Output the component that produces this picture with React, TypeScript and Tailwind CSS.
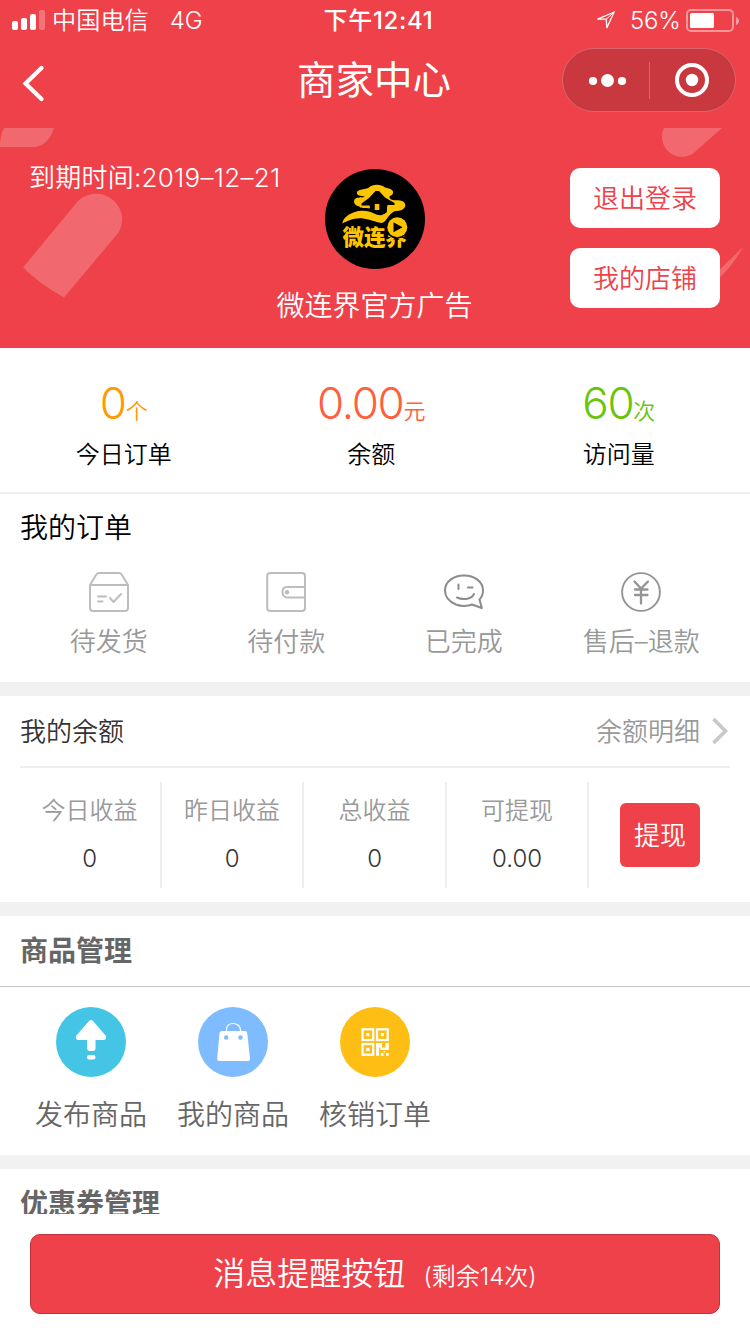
import type { ReactNode } from "react";

function SignalIcon() {
  return (
    <svg width="33" height="20" viewBox="0 0 33 20" fill="#fff">
      <rect x="0" y="11" width="6" height="9" rx="2" />
      <rect x="9" y="8" width="6" height="12" rx="2" />
      <rect x="18" y="4" width="6" height="16" rx="2" />
      <rect x="27" y="0" width="6" height="20" rx="2" opacity="0.27" />
    </svg>
  );
}

function StatusBar() {
  return (
    <div className="flex h-10 items-center font-[350] text-white">
      <div className="flex flex-1 items-center pl-3">
        <SignalIcon />
        <span className="ml-[7px] pt-[2px] text-[24.200px] leading-10">中国电信</span>
        <span className="ml-[21px] pt-[2px] text-[24px] leading-10">4G</span>
      </div>
      <div className="w-[118px] pl-[6px] pt-[2px] text-center text-[24px] font-medium leading-10 tracking-[0.7px] whitespace-nowrap">
        下午12:41
      </div>
      <div className="flex flex-1 items-center justify-end pr-[11px]">
        <svg width="20" height="20" viewBox="0 0 20 20" fill="none" stroke="#fff" strokeWidth="1.3">
          <path d="M1.500 9.200 18 2.200 10.800 18 10.300 9.200Z" />
          <path d="M10.300 9.200 18 2.200" strokeWidth="1" />
        </svg>
        <span className="ml-[14px] w-[50px] pt-[2px] text-[24px] leading-10 tracking-[-0.2px] whitespace-nowrap">56%</span>
        <svg className="ml-[6px]" width="53" height="23" viewBox="0 0 53 23">
          <rect x="1" y="1" width="46" height="21" rx="4" fill="none" stroke="#fff" strokeOpacity="0.45" strokeWidth="2" />
          <rect x="4" y="4" width="24" height="15" rx="1.5" fill="#fff" />
          <path d="M50 8c4 1.500 4 6.500 0 8z" fill="#fff" fillOpacity="0.5" />
        </svg>
      </div>
    </div>
  );
}

function NavBar() {
  return (
    <div className="flex h-22 items-start text-white">
      <div className="flex w-[297px] pl-[22px] pt-[25px]">
        <svg width="23" height="37" viewBox="0 0 23 37" fill="none" stroke="#fff" strokeWidth="4.200" strokeLinecap="round" strokeLinejoin="miter">
          <path d="M19.500 3 3.500 18.500 19.500 34" />
        </svg>
      </div>
      <div className="pt-[8px] text-[38.500px] leading-[64px]">商家中心</div>
      <div className="flex flex-1 justify-end pr-[14px] pt-2">
        <div className="flex h-16 w-[174px] items-center rounded-full border border-[#d8666e] bg-[#c9383f]">
          <svg width="86" height="62" viewBox="0 0 86 62" fill="#fff">
            <circle cx="30" cy="32" r="4.100" />
            <circle cx="44.500" cy="31.500" r="6.500" />
            <circle cx="59" cy="32" r="4.100" />
          </svg>
          <div className="h-[37px] w-px bg-[#d8666e]" />
          <svg width="85" height="62" viewBox="0 0 85 62">
            <circle cx="42" cy="31" r="15" fill="none" stroke="#fff" strokeWidth="4" />
            <circle cx="42" cy="31" r="6.200" fill="#fff" />
          </svg>
        </div>
      </div>
    </div>
  );
}

function Logo() {
  return (
    <div className="relative size-[100px] overflow-hidden rounded-full bg-black">
      <svg className="absolute inset-0" width="100" height="100" viewBox="0 0 100 100">
        <path
          fill="#fdc400"
          d="M45 39.500C40 39 34.500 39.500 34.500 37.500C29 36.500 28 32 30 30C33 27.500 36 29.500 40 27.500C36 26.500 31 27 32 23C34 19.500 40 21 44 18.500C47 15 56 14.500 60 18.500C64 19.500 69 20 68 24.500C67 27 63 26.500 65 29.500C68 33 74 29.500 79 33C83 38 77 42.500 71 42C67 42.500 67 44.500 62 46H56Z"
        />
        <path fill="#000" d="M50.500 22H54L60 28.500 69.500 34V36H62.500C61.500 39 62.500 41 61.500 44L56 46.500 47 44.500 40 40.500C45 41 45.500 39 44.500 36.500H36.500V34.500L44 29Z" />
        <path
          fill="#fdc400"
          d="M17.300 54.500C18 48 27 42 37 41.800C48 41.500 49 46.500 56 46.300C60 46 61 43 64 42.500H69C66 44 65 46 63 48C61 51 60 53 57 54C51 53.500 46 50.500 38 49.500C29 48.500 23 52 17.300 54.500Z"
        />
        <path fill="#fdc400" d="M49.800 35H54.300V41H49.800Z" />
      </svg>
      <div className="absolute left-[18px] top-[54px] text-[21.500px] font-black leading-[28px] tracking-[-0.1px] whitespace-nowrap text-[#fdc400]">
        微连界
      </div>
      <svg className="absolute inset-0" width="100" height="100" viewBox="0 0 100 100">
        <circle cx="72" cy="57.500" r="12" fill="#000" />
        <circle cx="72.300" cy="58.300" r="10" fill="#fdc400" />
        <path d="M68.500 53.300V63.300L77.500 58.300Z" fill="#000" />
      </svg>
    </div>
  );
}

function HeaderButton({ children }: { children: ReactNode }) {
  return (
    <button className="h-[60px] w-[150px] rounded-[10px] bg-white text-[26px] font-[350] text-[#ee4149]">
      {children}
    </button>
  );
}

function Profile() {
  return (
    <div className="relative h-[220px] text-white">
      <svg className="absolute inset-0" width="750" height="220" viewBox="0 0 750 220" fill="#f1696f">
        <path d="M4 0H54C51 11 43 19 33 19H0C0 12 1 5 4 0Z" />
        <path d="M23 139.500 78 73A26 26 0 0 1 119 104L64 169.500Q41 157 23 139.500Z" />
        <path d="M664 0H722L697 22A20 20 0 0 1 664 0Z" />
        <path d="M743 119Q733 138 716 153V145Z" />
      </svg>
      <div className="relative flex">
        <div className="w-[250px] flex-1 pl-[29px] pt-[30px] text-[26px] font-[350] leading-[40px] tracking-[0.25px] whitespace-nowrap">
          到期时间:2019–12–21
        </div>
        <div className="flex w-[210px] flex-col items-center pt-[41px]">
          <Logo />
          <div className="mt-[17px] text-[28px] font-[350] leading-[40px]">微连界官方广告</div>
        </div>
        <div className="flex flex-1 flex-col items-end gap-5 pr-[30px] pt-10">
          <HeaderButton>退出登录</HeaderButton>
          <HeaderButton>我的店铺</HeaderButton>
        </div>
      </div>
    </div>
  );
}

function Stat({ value, unit, label, tone }: { value: string; unit: string; label: string; tone: string }) {
  return (
    <div className="flex w-[247.500px] flex-col items-center">
      <div className={`flex items-baseline ${tone}`}>
        <span className="text-[44px] font-[350] leading-[60px] tracking-[-1.3px]">{value}</span>
        <span className="text-[22px] font-[350] leading-[60px]">{unit}</span>
      </div>
      <div className="-mt-[4px] text-[24px] font-[350] leading-[36px] text-black">{label}</div>
    </div>
  );
}

function BoxIcon() {
  return (
    <svg width="40" height="40" viewBox="0 0 40 40" fill="none" stroke="#bdbdbd" strokeWidth="2" strokeLinecap="round" strokeLinejoin="round">
      <path d="M1 13 7 3Q8 1 10 1H30Q32 1 33 3L39 13V36Q39 39 36 39H4Q1 39 1 36ZM1 13H39" />
      <path d="M9 24.500H17M9 29.500H13.500M21 26 24.500 30 32 22" />
    </svg>
  );
}

function WalletIcon() {
  return (
    <svg width="40" height="40" viewBox="0 0 40 40" fill="none" stroke="#bdbdbd" strokeWidth="2">
      <rect x="1.200" y="1" width="37.800" height="38" rx="3" />
      <path d="M39 15H21Q16.500 15 16.500 20T21 25.500H39" />
      <circle cx="21" cy="20.200" r="2.200" fill="#bdbdbd" stroke="none" />
    </svg>
  );
}

function SmileIcon() {
  return (
    <svg width="40" height="40" viewBox="0 0 40 40" fill="none" stroke="#8c8c8c" strokeWidth="2" strokeLinecap="round" strokeLinejoin="round">
      <path d="M35.500 27.500 37.800 36 28 32.500C24 34.300 17 34.500 12 32.500C5 29.500 1 25 1 18.500C1 9.500 9.500 3.500 20 3.500S39 9.500 39 18.500C39 22 38 25 35.500 27.500Z" />
      <path d="M14.500 12.500V17M24 15.500H28.500M13 25.500C18 28 27 28 30 22" />
    </svg>
  );
}

function YuanIcon() {
  return (
    <svg width="40" height="40" viewBox="0 0 40 40" fill="none" stroke="#949494" strokeLinecap="round">
      <circle cx="20" cy="20" r="18.900" strokeWidth="1.900" />
      <path strokeWidth="2.300" d="M13.500 9.500 20 16.500 27 9.500M20 16.500V31.500M14 17.500H26.500M14 23H26.500" />
    </svg>
  );
}

function OrderLink({ icon, label }: { icon: ReactNode; label: string }) {
  return (
    <div className="flex flex-1 flex-col items-center">
      {icon}
      <div className="mt-[10px] text-[26px] font-[350] leading-[40px] whitespace-nowrap text-[#999]">{label}</div>
    </div>
  );
}

function Income({ label, value }: { label: string; value: string }) {
  return (
    <div className="flex w-[142.500px] flex-col items-center border-r-2 border-[#eee] pt-[11px]">
      <div className="text-[24px] font-[350] leading-[36px] text-[#999]">{label}</div>
      <div className="mt-[12px] text-[24px] font-[350] leading-[36px] text-[#333]">{value}</div>
    </div>
  );
}

function UploadIcon() {
  return (
    <svg width="70" height="70" viewBox="0 0 70 70">
      <circle cx="35" cy="35" r="35" fill="#45c5e5" />
      <g fill="#fff">
        <path d="M33 14Q35 12 37 14L50 29Q51 33 47 33H39.500V41Q39.500 44 37 44H34Q31 44 31 41V33H22Q19 32 20 29Z" />
        <rect x="31" y="48" width="8.500" height="4.500" rx="2" />
      </g>
    </svg>
  );
}

function BagIcon() {
  return (
    <svg width="70" height="70" viewBox="0 0 70 70">
      <circle cx="35" cy="35" r="35" fill="#7fbcff" />
      <path d="M28.500 25V23C28.500 19 31 16.500 35 16.500S42.500 19 42.500 23V25" fill="none" stroke="#fff" strokeWidth="1.200" />
      <path d="M24 24H47Q49 24 49.200 26L52 51.500Q52 54 50 54H21Q19 54 19.200 51.500L21.500 26Q22 24 24 24Z" fill="#fff" />
      <circle cx="28.200" cy="30.500" r="2.200" fill="#7fbcff" />
      <circle cx="42.500" cy="30.500" r="2.200" fill="#7fbcff" />
    </svg>
  );
}

function QrIcon() {
  return (
    <svg width="70" height="70" viewBox="0 0 70 70">
      <circle cx="35" cy="35" r="35" fill="#febe14" />
      <g fill="none" stroke="#fff" strokeWidth="2.200">
        <rect x="22.500" y="22.300" width="10.700" height="10.700" />
        <rect x="37" y="22.300" width="10.700" height="10.700" />
        <rect x="22.500" y="37" width="10.700" height="10.700" />
      </g>
      <g fill="#fff">
        <path d="M26.200 26h3.200v3.200H26.200zM40.800 26h3.200v3.200h-3.200zM26.200 40.700h3.200v3.200H26.200z" />
        <path d="M36 36H42V40.500H45.500V36H48.800V43H40.500V40.500H39V48.800H36ZM40.800 46H43.500V48.800H40.800ZM46 46H48.800V48.800H46ZM43.500 44H45V45.500H43.500Z" />
      </g>
    </svg>
  );
}

function GoodsLink({ icon, label }: { icon: ReactNode; label: string }) {
  return (
    <div className="flex w-[142px] flex-col items-center">
      {icon}
      <div className="mt-[18px] text-[28px] font-[350] leading-[40px] text-[#666]">{label}</div>
    </div>
  );
}

export default function App() {
  return (
    <div className="flex h-[1334px] w-[750px] flex-col overflow-hidden bg-[#f1f1f1] font-['Inter','Noto_Sans_CJK_SC',sans-serif]">
      <header className="bg-[#ee4149]">
        <StatusBar />
        <NavBar />
        <Profile />
      </header>

      <section className="flex h-[146px] border-b-2 border-[#eee] bg-white pt-[25px]">
        <Stat value="0" unit="个" label="今日订单" tone="text-[#ff9a02]" />
        <Stat value="0.00" unit="元" label="余额" tone="text-[#ff5f3d]" />
        <Stat value="60" unit="次" label="访问量" tone="text-[#6bc40c]" />
      </section>

      <section className="h-[188px] bg-white pt-[14px]">
        <h2 className="pl-5 text-[28px] font-[350] leading-[40px] text-black">我的订单</h2>
        <div className="mt-[24px] flex px-5">
          <OrderLink icon={<BoxIcon />} label="待发货" />
          <OrderLink icon={<WalletIcon />} label="待付款" />
          <OrderLink icon={<SmileIcon />} label="已完成" />
          <OrderLink icon={<YuanIcon />} label="售后–退款" />
        </div>
      </section>

      <section className="mt-[14px] h-[206px] bg-white px-5">
        <div className="flex h-[72px] items-center justify-between border-b-2 border-[#eee]">
          <h2 className="text-[26px] font-[350] text-[#333]">我的余额</h2>
          <div className="flex items-center text-[26px] font-[350] text-[#999]">
            余额明细
            <svg className="ml-[12px] mr-[2px]" width="16" height="28" viewBox="0 0 16 28" fill="none" stroke="#c7c7cc" strokeWidth="3.600">
              <path d="M1.500 2 13.500 14 1.500 26" />
            </svg>
          </div>
        </div>
        <div className="mt-[14px] -ml-[0.700px] flex h-[106px]">
          <Income label="今日收益" value="0" />
          <Income label="昨日收益" value="0" />
          <Income label="总收益" value="0" />
          <Income label="可提现" value="0.00" />
          <div className="flex flex-1 items-center justify-end pr-[30px]">
            <button className="h-16 w-20 rounded-[6px] bg-[#ee4149] text-[26px] font-[350] text-white">提现</button>
          </div>
        </div>
      </section>

      <section className="mt-[14px] h-[239px] bg-white">
        <h2 className="h-[71px] border-b border-[#c8c8c8] pl-5 text-[28px] font-bold leading-[71px] text-[#666]">商品管理</h2>
        <div className="flex px-5 pt-5">
          <GoodsLink icon={<UploadIcon />} label="发布商品" />
          <GoodsLink icon={<BagIcon />} label="我的商品" />
          <GoodsLink icon={<QrIcon />} label="核销订单" />
        </div>
      </section>

      <section className="mt-[14px] h-[45px] overflow-hidden bg-white">
        <h2 className="pl-5 text-[28px] font-bold leading-[70px] text-[#666]">优惠券管理</h2>
      </section>

      <footer className="h-[120px] bg-white px-[30px] pt-5">
        <button className="flex h-20 w-full items-baseline justify-center rounded-[10px] border border-[#bf343a] bg-[#ee4149] font-[350] text-white">
          <span className="text-[32px] leading-[78px]">消息提醒按钮</span>
          <span className="ml-[18px] text-[24px]">(剩余14次)</span>
        </button>
      </footer>
    </div>
  );
}
